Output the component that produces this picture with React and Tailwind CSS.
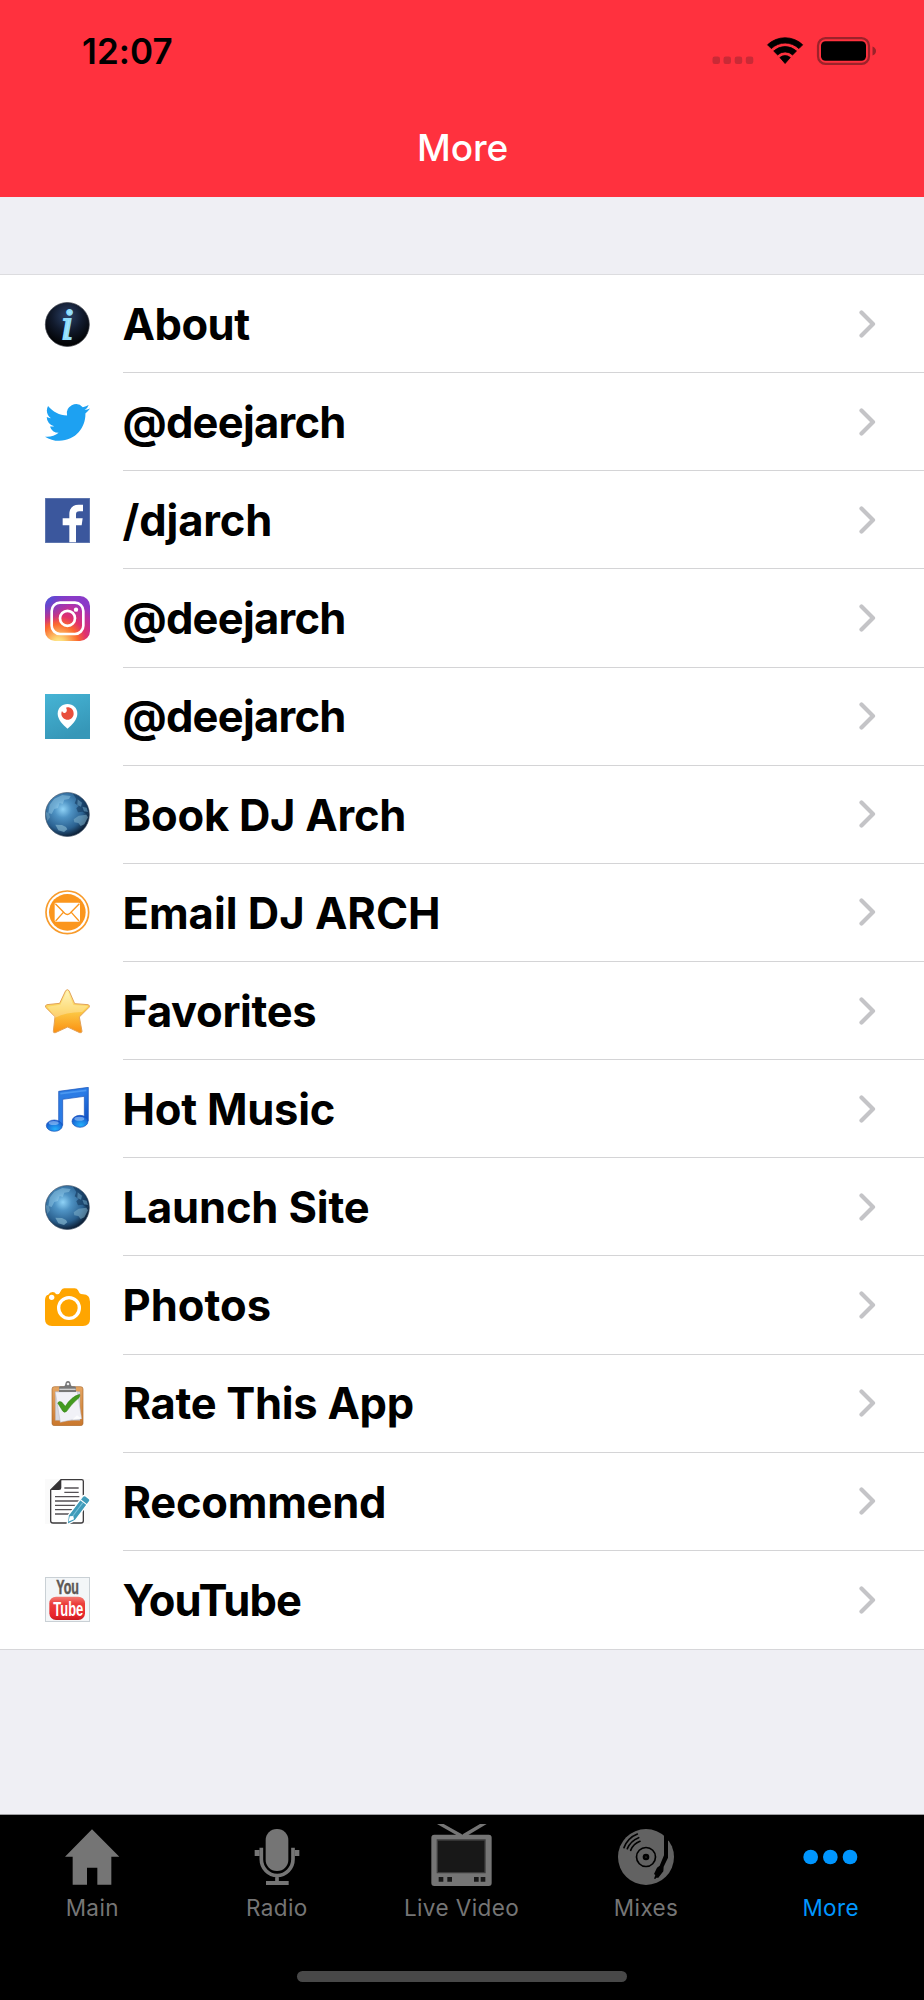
import React, { useState } from 'react';

const AboutIcon = () => (
    <svg viewBox="0 0 135 135" className="size-[45px] overflow-visible">
        <defs>
            <radialGradient id="aboutBg" cx="50%" cy="30%" r="65%">
                <stop offset="0" stopColor="#2b4168" />
                <stop offset="0.55" stopColor="#111a2c" />
                <stop offset="1" stopColor="#020305" />
            </radialGradient>
        </defs>
        <circle cx="67" cy="67.5" r="66" fill="url(#aboutBg)" stroke="#3c4048" strokeWidth="2" />
        <text x="66" y="110" textAnchor="middle" fontSize="132" fontStyle="italic" fill="#a4e8ff" stroke="#8fdcfc" strokeWidth="6" className="font-['Liberation_Serif',serif]">i</text>
    </svg>
);

const TwitterIcon = () => (
    <svg viewBox="0 0 24 24" className="size-[45px]">
        <path fill="#1da1f2" d="M23.953 4.57a10 10 0 01-2.825.775 4.958 4.958 0 002.163-2.723c-.951.555-2.005.959-3.127 1.184a4.92 4.92 0 00-8.384 4.482C7.69 8.095 4.067 6.13 1.64 3.162a4.822 4.822 0 00-.666 2.475c0 1.71.87 3.213 2.188 4.096a4.904 4.904 0 01-2.228-.616v.06a4.923 4.923 0 003.946 4.827 4.996 4.996 0 01-2.212.085 4.936 4.936 0 004.604 3.417 9.867 9.867 0 01-6.102 2.105c-.39 0-.779-.023-1.17-.067a13.995 13.995 0 007.557 2.209c9.053 0 13.998-7.496 13.998-13.985 0-.21 0-.42-.015-.63A9.935 9.935 0 0024 4.59z" />
    </svg>
);

const FacebookIcon = () => (
    <svg viewBox="0 0 135 135" className="size-[45px]">
        <rect width="135" height="135" fill="#6f84b8" />
        <rect x="2" y="2" width="131" height="131" fill="#3b579d" />
        <path fill="#fff" d="M73 133V82H53V61h20V49c0-19 11-29 28-29h13v20h-11c-7 0-10 3-10 10v11h20l-3 21H93v51z" />
    </svg>
);

const InstagramIcon = () => (
    <svg viewBox="0 0 135 135" className="size-[45px]">
        <defs>
            <radialGradient id="igWarm" cx="30%" cy="107%" r="105%">
                <stop offset="0" stopColor="#fff0a0" />
                <stop offset="0.13" stopColor="#fdd774" />
                <stop offset="0.42" stopColor="#fb6a2e" />
                <stop offset="0.6" stopColor="#e1306c" />
                <stop offset="0.85" stopColor="#b52fa8" />
                <stop offset="1" stopColor="#8a3ac8" />
            </radialGradient>
            <radialGradient id="igCool" cx="-5%" cy="0%" r="65%">
                <stop offset="0" stopColor="#3b66e0" />
                <stop offset="0.35" stopColor="#5a4bd4" stopOpacity="0.85" />
                <stop offset="1" stopColor="#7a3ac8" stopOpacity="0" />
            </radialGradient>
        </defs>
        <rect width="135" height="135" rx="30" fill="url(#igWarm)" />
        <rect width="135" height="135" rx="30" fill="url(#igCool)" />
        <g fill="none" stroke="#fff" strokeWidth="8">
            <rect x="20" y="20" width="95" height="94" rx="25" />
            <circle cx="67.5" cy="67" r="22.5" />
        </g>
        <circle cx="93" cy="41" r="6.5" fill="#fff" />
    </svg>
);

const PeriscopeIcon = () => (
    <svg viewBox="0 0 135 135" className="size-[45px]">
        <defs>
            <linearGradient id="periBg" x1="0" y1="0" x2="0.4" y2="1">
                <stop offset="0" stopColor="#46b4d5" />
                <stop offset="1" stopColor="#3697b8" />
            </linearGradient>
        </defs>
        <rect width="135" height="135" fill="url(#periBg)" />
        <path fill="#fff" d="M67.5 30C51 30 38 42 38 59c0 18 17 34 29.5 45C80 93 97 77 97 59c0-17-13-29-29.500-29z" />
        <path fill="#e84f3d" d="M67 40c12 0 19 8 19 19 0 10-8 18-18 18s-19-8-19-18c0-3 1-6 2-8 2 5 6 7 10 5 5-2 6-9 2-15z" />
    </svg>
);

const GlobeIcon = () => (
    <svg viewBox="0 0 135 135" className="size-[45px]">
        <defs>
            <radialGradient id="globeBg" cx="40%" cy="38%" r="64%">
                <stop offset="0" stopColor="#8fd2f6" />
                <stop offset="0.3" stopColor="#4f93c4" />
                <stop offset="0.72" stopColor="#2a608f" />
                <stop offset="1" stopColor="#0b1d33" />
            </radialGradient>
            <clipPath id="globeClip"><circle cx="67" cy="67.5" r="66" /></clipPath>
        </defs>
        <circle cx="67" cy="67.5" r="66" fill="url(#globeBg)" stroke="#43556a" strokeWidth="2" />
        <g clipPath="url(#globeClip)">
            <path fill="#a6daf3" opacity="0.4" d="M14 38l14-18 24-11 25 3-5 9-14 2-5 13-9-3-5 15-11 3-8 15-10-3z" />
            <path fill="#0c2c4d" opacity="0.5" d="M84 5l18 6 20 17 10 27-7 12-12-8-14 2-5-12 7-7-12-8 5-13z" />
            <path fill="#6fa6c6" opacity="0.55" d="M98 22l13 10-3 12-11-5zM112 44l13 3 4 13-12-2z" />
            <path fill="#7fb0ca" opacity="0.55" d="M86 82l15-11 23-3 5 8-11 21-11 5-7-9-12-2z" />
            <path fill="#8fbfd5" opacity="0.6" d="M31 98l20 1 12 6 4 7-10 8-17-5z" />
            <path fill="#86b6ce" opacity="0.4" d="M2 60l9 3 4 13-8 11z" />
        </g>
    </svg>
);

const EmailIcon = () => (
    <svg viewBox="0 0 135 135" className="size-[45px]">
        <circle cx="67" cy="67" r="64" fill="none" stroke="#f89b2b" strokeWidth="5" />
        <circle cx="67" cy="67" r="55" fill="#fb961d" />
        <rect x="29" y="38" width="76" height="57" rx="4" fill="#fff" />
        <path fill="none" stroke="#fb961d" strokeWidth="4" d="M31 41l28 29q8 7 16 0l28-29M32 93l23-26M102 93L79 67" />
    </svg>
);

const StarIcon = () => (
    <svg viewBox="0 0 135 135" className="size-[45px]">
        <defs>
            <linearGradient id="starBg" x1="0" y1="0" x2="0" y2="1">
                <stop offset="0" stopColor="#fff3a8" />
                <stop offset="0.45" stopColor="#fcd04c" />
                <stop offset="1" stopColor="#fb8f10" />
            </linearGradient>
        </defs>
        <path fill="url(#starBg)" stroke="#e3a257" strokeWidth="3" strokeLinejoin="round" d="M62 5q5-6 10 0l17 39 40 3q7 2 3 8l-29 29 8 43q-1 6-7 4l-36-17-37 17q-6 2-6-4l5-44L2 55q-3-6 4-8l38-4z" />
        <path fill="#fff" opacity="0.28" d="M67 6l18 42 44 3-18 18Q62 70 31 86L7 53l39-6z" />
    </svg>
);

const MusicIcon = () => (
    <svg viewBox="0 0 135 135" className="size-[45px]">
        <defs>
            <linearGradient id="noteBg" x1="0" y1="0" x2="1" y2="1">
                <stop offset="0" stopColor="#2f7de0" />
                <stop offset="0.5" stopColor="#2a7be6" />
                <stop offset="1" stopColor="#0b49bd" />
            </linearGradient>
            <radialGradient id="noteHead" cx="55%" cy="80%" r="70%">
                <stop offset="0" stopColor="#25b0fb" />
                <stop offset="1" stopColor="#1557cc" />
            </radialGradient>
        </defs>
        <path fill="url(#noteBg)" stroke="#1550b8" strokeWidth="2" d="M41 13l89-12v100h-12V28L53 37v78H41z" />
        <path fill="none" stroke="#6ab4ff" strokeWidth="5" opacity="0.5" d="M46 20l78-10" />
        <ellipse cx="28" cy="116" rx="24" ry="17" fill="url(#noteHead)" stroke="#1550b8" strokeWidth="2" />
        <ellipse cx="105" cy="103" rx="24" ry="18" fill="url(#noteHead)" stroke="#1550b8" strokeWidth="2" />
        <ellipse cx="26" cy="108" rx="15" ry="6" fill="#bcdcff" opacity="0.5" />
        <ellipse cx="103" cy="95" rx="15" ry="6" fill="#bcdcff" opacity="0.5" />
    </svg>
);

const CameraIcon = () => (
    <svg viewBox="0 -7 135 135" className="size-[45px]">
        <path fill="#ffa500" d="M0 45Q0 30 10 28q4-8 13-8 7 0 10 6 8 3 11-3l5-9q3-5 9-5h31q7 0 10 6l5 9q3 3 10 3 21 1 21 22v53q0 20-21 20H21Q0 122 0 102z" />
        <circle cx="72" cy="68" r="31" fill="none" stroke="#fff" strokeWidth="10" />
        <circle cx="20" cy="36" r="8" fill="#fff" />
    </svg>
);

const ClipboardIcon = () => (
    <svg viewBox="0 0 135 135" className="size-[45px]">
        <defs>
            <linearGradient id="boardBg" x1="0" y1="0" x2="0" y2="1">
                <stop offset="0" stopColor="#e5a562" />
                <stop offset="1" stopColor="#c9772c" />
            </linearGradient>
        </defs>
        <rect x="21" y="17" width="93" height="117" rx="7" fill="url(#boardBg)" stroke="#a9692f" strokeWidth="2" />
        <path fill="#d7d8e0" stroke="#aaaab2" strokeWidth="1" d="M31 32h74v86H31z" />
        <path fill="#f1f1f7" stroke="#b9bac6" strokeWidth="1.5" d="M31 33l66-1 13 81-28 3-36 8z" />
        <path fill="#fff" opacity="0.8" d="M82 116l14-13 14 10z" />
        <path fill="#777" d="M42 20q0-4 5-4h9q5-1 5-7 1-9 8-9t8 9q0 6 5 7h6q5 0 5 5v12H42z" />
        <path fill="#d0d0d0" d="M43 23h49v4H43z" />
        <circle cx="69" cy="9" r="4" fill="#eee" />
        <path fill="#439a1f" stroke="#2f7d12" strokeWidth="1.5" d="M38 66q4-7 12-3l11 13q17-29 43-36 2 4-2 10-24 20-37 41-7 6-12-1z" />
    </svg>
);

const DocumentIcon = () => (
    <svg viewBox="0 0 135 135" className="size-[45px]">
        <rect width="135" height="135" fill="#fafafa" />
        <path fill="#fff" stroke="#3d3b3d" strokeWidth="4" d="M48 2h62q5 0 5 5v118q0 7-7 7H24q-7 0-7-7V33z" />
        <path fill="#343234" d="M49 1v25q0 7-7 7H17z" />
        <path stroke="#555155" strokeWidth="4" d="M58 27h43M58 40h43M30 53h73M30 66h73M30 79h62M30 92h56M30 105h48" />
        <g transform="translate(66 134) rotate(-53)">
            <path fill="#3f9bb9" stroke="#fff" strokeWidth="4" d="M-2 2l24-14h71q7 0 7 7v12q0 7-7 7H23z" />
            <path fill="#fff" d="M8 0l15-7 7 8-7 8zM80-11h3v25h-3z" />
            <path stroke="#7cc3dc" strokeWidth="3" d="M29 0h50" />
        </g>
    </svg>
);

const YouTubeIcon = () => (
    <svg viewBox="0 0 135 135" className="size-[45px] overflow-visible">
        <defs>
            <linearGradient id="tubeBg" x1="0" y1="0" x2="0" y2="1">
                <stop offset="0" stopColor="#f47a72" />
                <stop offset="0.3" stopColor="#ec3f3c" />
                <stop offset="0.8" stopColor="#e9262c" />
                <stop offset="1" stopColor="#c81b20" />
            </linearGradient>
        </defs>
        <rect width="135" height="135" fill="#c9d0d5" />
        <rect x="3" y="3" width="129" height="129" fill="#f3f6f8" />
        <rect x="13" y="59" width="107" height="70" rx="20" fill="url(#tubeBg)" />
        <g fontWeight="700" className="font-['Liberation_Sans',sans-serif]">
            <text x="34" y="52" fontSize="59" textLength="68" lengthAdjust="spacingAndGlyphs" fill="#5d5855" stroke="#5d5855" strokeWidth="1.5">You</text>
            <text x="25" y="117" fontSize="61" textLength="90" lengthAdjust="spacingAndGlyphs" fill="#fff">Tube</text>
        </g>
    </svg>
);

const HomeTab = () => (
    <path d="M93 16l82 82h-24v84h-42v-51H78v51H35V98H12z" />
);

const RadioTab = () => (
    <>
        <rect x="59" y="15" width="68" height="126" rx="33" />
        <path fill="none" stroke="currentColor" strokeWidth="11" d="M46 71v35a47 48 0 0 0 95 0V71M93 154v20" />
        <path d="M26 78h15v18H26zM146 78h14v18h-14zM60 171h68v12H60z" />
    </>
);

const VideoTab = () => (
    <g transform="translate(2 0)">
        <path d="M19 0h20l59 33H77zM168 0h-20L92 33h21z" />
        <rect x="2" y="32" width="181" height="154" rx="9" />
        <path fill="#3c3c3c" d="M18 46h147v102H18z" />
        <path fill="#181818" d="M22 50h139v94H22zM24 159h14v14H24zM50 159h14v14H50zM130 159h14v14h-14zM150 159h14v14h-14z" />
    </g>
);

const MixesTab = () => (
    <>
        <circle cx="93" cy="99" r="84" className="text-[#626262]" fill="currentColor" />
        <circle cx="93" cy="99" r="28.5" fill="none" stroke="#000" strokeWidth="5" />
        <circle cx="93" cy="99" r="10" fill="#000" />
        <circle cx="93" cy="99" r="1.5" fill="#777" />
        <path fill="none" stroke="#000" strokeWidth="5" strokeLinecap="round" d="M27 71a71 71 0 0 1 40-41M37 74a60 60 0 0 1 34-33M47 79a49 49 0 0 1 28-27" />
        <path fill="#000" d="M147 8h19v38l-7 5v50l-13 27-1 14-15 19h-6l-2 3h-5l4-11-4-3 9-19 8-6 13-31z" />
    </>
);

const MoreTab = () => (
    <>
        <circle cx="32" cy="99" r="22" />
        <circle cx="91" cy="99" r="22" />
        <circle cx="150" cy="99" r="22" />
    </>
);

const items = [
    { label: 'About', Icon: AboutIcon, tracking: 'tracking-[-0.5px]' },
    { label: '@deejarch', Icon: TwitterIcon, tracking: 'tracking-[-0.75px]' },
    { label: '/djarch', Icon: FacebookIcon, tracking: 'tracking-[-0.15px]' },
    { label: '@deejarch', Icon: InstagramIcon, tracking: 'tracking-[-0.75px]' },
    { label: '@deejarch', Icon: PeriscopeIcon, tracking: 'tracking-[-0.75px]' },
    { label: 'Book DJ Arch', Icon: GlobeIcon, tracking: 'tracking-[-0.25px]' },
    { label: 'Email DJ ARCH', Icon: EmailIcon, tracking: 'tracking-normal' },
    { label: 'Favorites', Icon: StarIcon, tracking: 'tracking-[-0.35px]' },
    { label: 'Hot Music', Icon: MusicIcon, tracking: 'tracking-[-0.25px]' },
    { label: 'Launch Site', Icon: GlobeIcon, tracking: 'tracking-[-0.15px]' },
    { label: 'Photos', Icon: CameraIcon, tracking: 'tracking-normal' },
    { label: 'Rate This App', Icon: ClipboardIcon, tracking: 'tracking-[-0.3px]' },
    { label: 'Recommend', Icon: DocumentIcon, tracking: 'tracking-[-0.25px]' },
    { label: 'YouTube', Icon: YouTubeIcon, tracking: 'tracking-[-0.9px]' },
];

const tabs = [
    { label: 'Main', Icon: HomeTab },
    { label: 'Radio', Icon: RadioTab },
    { label: 'Live Video', Icon: VideoTab },
    { label: 'Mixes', Icon: MixesTab },
    { label: 'More', Icon: MoreTab },
];

const App = () => {
    const [activeTab, setActiveTab] = useState('More');

    return (
        <div className="flex h-[2000px] w-[924px] flex-col overflow-hidden bg-[#efeff4] font-['Inter',sans-serif]">
            {/* Status bar + title */}
            <header className="flex h-[197px] shrink-0 flex-col bg-[#ff313e]">
                <div className="flex h-[101px] items-center justify-between pr-[48px] pl-[82px]">
                    <span className="pt-px text-[35px] leading-none font-semibold tracking-[0.1px] text-black">12:07</span>
                    <svg viewBox="0 0 164 28" className="h-[28px] w-[164px]">
                        <g fill="#c92a36">
                            <rect x="0.5" y="19.5" width="7.5" height="7.5" rx="2.3" />
                            <rect x="11.5" y="19.5" width="7.5" height="7.5" rx="2.3" />
                            <rect x="22.7" y="19.5" width="7.5" height="7.5" rx="2.3" />
                            <rect x="33.8" y="19.5" width="7.5" height="7.5" rx="2.3" />
                        </g>
                        <path d="M55.5 7.800a25.500 25.500 0 0 1 35.200 0l-3.800 3.800a20 20 0 0 0-27.600 0zM61.700 14a16.700 16.700 0 0 1 22.800 0l-3.900 3.900a11 11 0 0 0-15 0zM67.900 20.500a8 8 0 0 1 10.400 0l-5.200 6z" stroke="#000" strokeWidth="0.8" strokeLinejoin="round" />
                        <rect x="106" y="1.2" width="51" height="25.6" rx="7.5" fill="none" stroke="#9c222a" strokeWidth="2.2" />
                        <rect x="109" y="4.3" width="45" height="19.4" rx="4.5" />
                        <path d="M160.500 9.500q3.500 1.500 3.500 4.500t-3.500 4.500z" fill="#9c222a" />
                    </svg>
                </div>
                <h1 className="pt-[28px] pl-px text-center text-[37px] leading-[38px] font-medium tracking-[-0.1px] text-white">More</h1>
            </header>

            {/* Menu list */}
            <ul className="mt-[77px] shrink-0 border-t border-[#dcdcdf] bg-white">
                {items.map(({ label, Icon, tracking }, i) => (
                    <li key={i} className="flex h-[98.15px] items-center pl-[44.5px]">
                        <Icon />
                        <div className={`ml-[33px] flex h-full flex-1 items-center justify-between pr-[48px] ${i < items.length - 1 ? 'border-b border-[#d4d4d6]' : ''}`}>
                            <span className={`pt-[2px] text-[43.5px] leading-none font-bold text-black ${tracking}`}>{label}</span>
                            <svg viewBox="0 0 17 28" className="h-[28px] w-[17px]" fill="none" stroke="#c4c4c7" strokeWidth="4.2" strokeLinecap="round" strokeLinejoin="round">
                                <path d="M2.500 2.500L14 14 2.500 25.500" />
                            </svg>
                        </div>
                    </li>
                ))}
            </ul>
            <div className="flex-1 border-t border-[#d6d6d9]"></div>

            {/* Bottom tab bar */}
            <nav className="flex h-[186px] shrink-0 flex-col items-center justify-between border-t border-[#a0a0a3] bg-black pb-[18px]">
                <div className="grid w-[923px] grid-cols-5 self-start pt-[9px]">
                    {tabs.map(({ label, Icon }) => (
                        <button
                            key={label}
                            onClick={() => setActiveTab(label)}
                            className={`flex flex-col items-center ${activeTab === label ? 'text-[#0096ff]' : 'text-[#757575]'}`}
                        >
                            <svg viewBox="0 0 186 186" className="size-[62px]" fill="currentColor"><Icon /></svg>
                            <span className="mt-[9px] text-[22.5px] leading-[26px] tracking-[0.4px]">{label}</span>
                        </button>
                    ))}
                </div>
                <div className="h-[11px] w-[330px] rounded-full bg-[#484848]"></div>
            </nav>
        </div>
    );
};

export default App;
